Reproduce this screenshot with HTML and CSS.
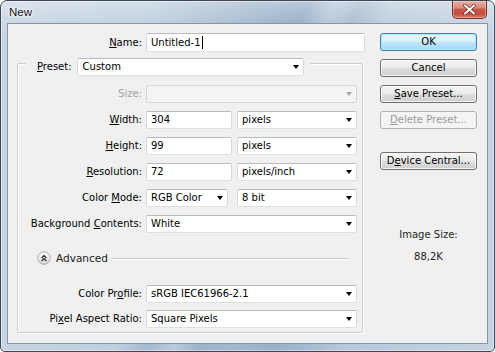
FILE: index.html
```html
<!DOCTYPE html>
<html>
<head>
<meta charset="utf-8">
<link rel="stylesheet" href="styles.css">
</head>
<body>
<div class="window">
  <div class="titlebar">
    <span class="title">New</span>
    <div class="close">
      <svg width="13" height="11" viewBox="0 0 13 11">
        <path d="M2 1.5 L11 9.5 M11 1.5 L2 9.5" stroke="#6e2b23" stroke-width="3.6" stroke-linecap="round"/>
        <path d="M2 1.5 L11 9.5 M11 1.5 L2 9.5" stroke="#ffffff" stroke-width="2" stroke-linecap="round"/>
      </svg>
    </div>
  </div>
  <div class="client">
    <div class="main">
      <div class="name-row">
        <span class="lbl name-lbl"><u>N</u>ame:</span>
        <div class="input name-input">Untitled-1<span class="caret"></span></div>
      </div>
      <div class="group">
        <div class="group-head">
          <span class="lbl"><u>P</u>reset:</span>
          <div class="select preset"><span>Custom</span><i class="arrow"></i></div>
        </div>
        <div class="grid">
          <span class="lbl disabled">Size:</span>
          <div class="select off"><span></span><i class="arrow"></i></div>

          <span class="lbl"><u>W</u>idth:</span>
          <div class="pair">
            <div class="input num">304</div>
            <div class="select unit"><span>pixels</span><i class="arrow"></i></div>
          </div>

          <span class="lbl"><u>H</u>eight:</span>
          <div class="pair">
            <div class="input num">99</div>
            <div class="select unit"><span>pixels</span><i class="arrow"></i></div>
          </div>

          <span class="lbl"><u>R</u>esolution:</span>
          <div class="pair">
            <div class="input num">72</div>
            <div class="select unit"><span>pixels/inch</span><i class="arrow"></i></div>
          </div>

          <span class="lbl">Color <u>M</u>ode:</span>
          <div class="pair">
            <div class="select mode"><span>RGB Color</span><i class="arrow"></i></div>
            <div class="select unit"><span>8 bit</span><i class="arrow"></i></div>
          </div>

          <span class="lbl">Background <u>C</u>ontents:</span>
          <div class="select"><span>White</span><i class="arrow"></i></div>
        </div>
        <div class="advanced">
          <svg class="adv-icon" width="14" height="14" viewBox="0 0 14 14">
            <defs>
              <linearGradient id="ag" x1="0" y1="0" x2="0" y2="1">
                <stop offset="0" stop-color="#ffffff"/>
                <stop offset="1" stop-color="#d6d6d6"/>
              </linearGradient>
            </defs>
            <circle cx="7" cy="7" r="6.3" fill="url(#ag)" stroke="#a8a8a8" stroke-width="1"/>
            <polyline points="4.6,7 7,4.6 9.4,7" fill="none" stroke="#2a2a2a" stroke-width="1.3"/>
            <polyline points="4.6,10 7,7.6 9.4,10" fill="none" stroke="#2a2a2a" stroke-width="1.3"/>
          </svg>
          <span class="adv-text">Advanced</span>
          <span class="adv-line"></span>
        </div>
        <div class="grid adv-grid">
          <span class="lbl">Color Pr<u>o</u>file:</span>
          <div class="select"><span>sRGB IEC61966-2.1</span><i class="arrow"></i></div>

          <span class="lbl">Pi<u>x</u>el Aspect Ratio:</span>
          <div class="select"><span>Square Pixels</span><i class="arrow"></i></div>
        </div>
      </div>
    </div>
    <div class="side">
      <div class="btn default">OK</div>
      <div class="btn">Cancel</div>
      <div class="btn"><u>S</u>ave Preset...</div>
      <div class="btn disabled-btn"><u>D</u>elete Preset...</div>
      <div class="btn device">D<u>e</u>vice Central...</div>
      <div class="info">Image Size:</div>
      <div class="info size-val">88,2K</div>
    </div>
  </div>
</div>
</body>
</html>
```

FILE: styles.css
```css
html, body {
  margin: 0;
  padding: 0;
  background: #ffffff;
}

body {
  width: 495px;
  height: 352px;
  overflow: hidden;
  font-family: "DejaVu Sans", "Liberation Sans", sans-serif;
  font-size: 10px;
  color: #000;
}

u {
  text-decoration: underline;
  text-underline-offset: 1px;
}

.window {
  box-sizing: border-box;
  width: 495px;
  height: 352px;
  border: 1px solid #3f4754;
  border-radius: 7px 7px 5px 5px;
  padding: 0 6px 7px 6px;
  display: flex;
  flex-direction: column;
  background:
    linear-gradient(to bottom, rgba(255,255,255,0.35) 0px, rgba(255,255,255,0.1) 22px, rgba(255,255,255,0) 40px),
    linear-gradient(115deg, rgba(255,255,255,0) 0%, rgba(255,255,255,0) 42%, rgba(80,110,150,0.22) 47%, rgba(255,255,255,0.05) 51%, rgba(80,110,150,0.18) 55%, rgba(255,255,255,0) 60%),
    linear-gradient(to right, #c7d5e3 0%, #bccdde 30%, #a3b8ce 48%, #98afc8 55%, #b6c8da 70%, #c5d3e2 100%);
  box-shadow: inset 0 0 0 1px rgba(255,255,255,0.45);
}

.titlebar {
  height: 22px;
  margin: 0 -6px;
  padding: 0 7px 0 8px;
  display: flex;
  align-items: flex-start;
  justify-content: space-between;
}

.title {
  font-family: "Liberation Sans", "DejaVu Sans", sans-serif;
  font-size: 11.5px;
  line-height: 22px;
  color: #111;
  text-shadow: 0 0 5px #fff, 0 0 3px #fff, 0 0 2px #fff;
}

.close {
  box-sizing: border-box;
  width: 35px;
  height: 18px;
  border: 1px solid #7c3128;
  border-top: none;
  border-radius: 0 0 5px 5px;
  background: linear-gradient(to bottom, #e9b1a6 0%, #d98a7c 40%, #c75746 50%, #c44d3b 75%, #dc7b62 100%);
  box-shadow: inset 0 0 0 1px rgba(255,220,210,0.45);
  display: flex;
  align-items: center;
  justify-content: center;
}

.client {
  flex: 1;
  box-sizing: border-box;
  border: 1px solid #8696a8;
  background: #f0f0f0;
  display: flex;
  padding-top: 9px;
}

.main {
  width: 357px;
}

.lbl {
  line-height: 18px;
  white-space: nowrap;
}

.disabled {
  color: #a3a3a3;
}

.name-row {
  display: flex;
  height: 19px;
}

.name-lbl {
  width: 134px;
  text-align: right;
  margin-right: 4px;
  line-height: 19px;
}

.input, .select {
  box-sizing: border-box;
  height: 18px;
  background: #fff;
  border: 1px solid;
  border-color: #b8bcc2 #d6dae0 #dde1e6 #d6dae0;
  border-radius: 2px;
  padding: 0 4px 0 4px;
  line-height: 16px;
  white-space: nowrap;
}

.name-input {
  width: 219px;
  height: 19px;
  line-height: 17px;
  display: flex;
  align-items: center;
}

.caret {
  display: inline-block;
  width: 1px;
  height: 13px;
  background: #000;
  margin-left: 1px;
}

.select {
  display: flex;
  justify-content: space-between;
  align-items: center;
}

.arrow {
  width: 0;
  height: 0;
  border-style: solid;
  border-width: 4px 3px 0 3px;
  border-color: #000 transparent transparent transparent;
  margin-right: 0px;
}

.select.off {
  background: #f4f4f4;
  border-color: #d4d6d9;
}

.select.off .arrow {
  border-top-color: #a8a8a8;
}

.group {
  box-sizing: border-box;
  width: 346px;
  margin: 11px 0 0 9px;
  border: 1px solid #c9ced3;
  border-radius: 2px;
  box-shadow: inset 1px 1px 0 #fff, 1px 1px 0 #fff;
  padding-bottom: 4px;
}

.group-head {
  display: flex;
  width: fit-content;
  margin: -6px 0 0 8px;
  padding: 0 6px 0 11px;
  background: #f0f0f0;
  gap: 5px;
}

.preset {
  width: 227px;
  padding-left: 5px;
}

.grid {
  display: grid;
  grid-template-columns: 124px 211px;
  column-gap: 4px;
  row-gap: 8px;
  grid-auto-rows: 18px;
  margin-top: 9px;
}

.grid > .lbl {
  text-align: right;
}

.pair {
  display: flex;
  justify-content: space-between;
}

.num {
  width: 86px;
}

.mode {
  width: 82px;
}

.unit {
  width: 120px;
}

.advanced {
  display: flex;
  align-items: center;
  height: 14px;
  margin-top: 18px;
  padding-left: 19px;
  padding-right: 14px;
}

.adv-icon {
  display: block;
  flex: none;
}

.adv-text {
  margin-left: 5px;
  font-size: 10.5px;
  color: #222;
}

.adv-line {
  flex: 1;
  height: 1px;
  margin-left: 5px;
  background: #c2c6ca;
  box-shadow: 0 1px 0 #fff;
}

.adv-grid {
  margin-top: 20px;
  row-gap: 7px;
}

.side {
  width: 97px;
  margin-left: 15px;
  display: flex;
  flex-direction: column;
  align-items: stretch;
}

.btn {
  box-sizing: border-box;
  height: 18px;
  margin-bottom: 8px;
  border: 1px solid #707070;
  border-radius: 3px;
  background: linear-gradient(to bottom, #f3f3f3 0%, #ebebeb 48%, #dddddd 52%, #cfcfcf 100%);
  box-shadow: inset 0 0 0 1px rgba(255,255,255,0.75);
  text-align: center;
  line-height: 16px;
  white-space: nowrap;
}

.btn.default {
  border-color: #3c7fb1;
  background: linear-gradient(to bottom, #eaf6fd 0%, #d9f0fc 48%, #bee6fd 52%, #a7d9f5 100%);
  box-shadow: inset 0 0 0 1px rgba(170,235,255,0.9);
}

.btn.disabled-btn {
  border-color: #adb2b5;
  background: #f4f4f4;
  color: #9a9a9a;
  box-shadow: none;
}

.btn.device {
  margin-top: 15px;
}

.info {
  text-align: center;
  line-height: 14px;
  color: #1e1e1e;
  margin-top: 50px;
}

.info.size-val {
  margin-top: 8px;
}
```
